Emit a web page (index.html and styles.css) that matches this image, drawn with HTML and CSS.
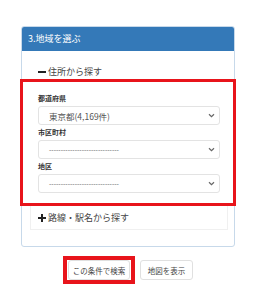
FILE: index.html
```html
<!DOCTYPE html>
<html lang="ja">
<head>
<meta charset="utf-8">
<link rel="stylesheet" href="styles.css">
</head>
<body>
<div class="panel">
  <div class="panel-head">3.地域を選ぶ</div>
  <div class="panel-body">
    <div class="toggle"><span class="sign minus"></span>住所から探す</div>
    <div class="redbox">
      <div class="label">都道府県</div>
      <div class="select"><span class="val dark">東京都(4,169件)</span><svg class="chev" width="7" height="5" viewBox="0 0 7 5"><path d="M1 1.2 L3.5 3.6 L6 1.2" fill="none" stroke="#666" stroke-width="1.2"/></svg></div>
      <div class="label">市区町村</div>
      <div class="select"><span class="val">------------------------------</span><svg class="chev" width="7" height="5" viewBox="0 0 7 5"><path d="M1 1.2 L3.5 3.6 L6 1.2" fill="none" stroke="#666" stroke-width="1.2"/></svg></div>
      <div class="label">地区</div>
      <div class="select"><span class="val">------------------------------</span><svg class="chev" width="7" height="5" viewBox="0 0 7 5"><path d="M1 1.2 L3.5 3.6 L6 1.2" fill="none" stroke="#666" stroke-width="1.2"/></svg></div>
    </div>
    <div class="route"><span class="sign plus"></span>路線・駅名から探す</div>
  </div>
</div>
<div class="actions">
  <div class="btn-mark"><button class="btn btn-search">この条件で検索</button></div>
  <button class="btn btn-map">地図を表示</button>
</div>
</body>
</html>
```
FILE: styles.css
```css
body {
  margin: 0;
  background: #fff;
  font-family: "Noto Sans CJK JP", "Noto Sans", sans-serif;
  color: #333;
}
.panel {
  margin: 26px 0 0 21px;
  width: 212px;
  border: 1px solid #c7d9ea;
  border-radius: 3px;
  background: #fff;
}
.panel-head {
  height: 24px;
  line-height: 24px;
  background: #3479b8;
  color: #fff;
  font-size: 9px;
  padding-left: 6px;
  border-radius: 2px 2px 0 0;
}
.panel-body {
  padding: 13px 0 16px;
}
.toggle {
  display: flex;
  align-items: center;
  height: 15px;
  padding-left: 16px;
  font-size: 9px;
  color: #444;
}
.sign {
  position: relative;
  width: 8px;
  height: 8px;
  margin-right: 2px;
  flex: none;
}
.sign::before, .plus::after {
  content: "";
  position: absolute;
  left: 0;
  top: 3px;
  width: 8px;
  height: 2px;
  background: #222;
}
.plus::after {
  left: 3px;
  top: 0;
  width: 2px;
  height: 8px;
}
.redbox {
  margin: 0 -2px;
  border: 3px solid #e8141b;
  padding: 9px 13px 10px 15px;
}
.label {
  height: 15px;
  line-height: 15px;
  font-size: 7px;
  font-weight: bold;
  color: #333;
}
.select {
  height: 19px;
  box-sizing: border-box;
  border: 1px solid #e3e3e3;
  border-radius: 3px;
  display: flex;
  align-items: center;
  justify-content: space-between;
  padding: 0 4px 0 10px;
}
.val {
  font-family: "Liberation Sans", sans-serif;
  font-size: 7px;
  color: #777;
}
.val.dark {
  font-family: "Noto Sans CJK JP", sans-serif;
  font-size: 8.5px;
  color: #555;
}
.route {
  margin: 0 6px 0 8px;
  height: 23px;
  border: 1px solid #f0f0f0;
  border-top: none;
  display: flex;
  align-items: center;
  padding-left: 7px;
  font-size: 9px;
  color: #444;
}
.actions {
  display: flex;
  justify-content: center;
  align-items: center;
  gap: 5px;
  margin: 9px 0 0 21px;
  width: 214px;
}
.btn-mark {
  border: 4px solid #e8141b;
  padding: 0 1px;
  display: flex;
}
.btn {
  height: 20px;
  padding: 0;
  background: #fff;
  border: 1px solid #e0e0e0;
  border-radius: 3px;
  font-family: "Noto Sans CJK JP", sans-serif;
  font-size: 7.5px;
  color: #444;
}
.btn-search {
  width: 62px;
}
.btn-map {
  width: 53px;
}
```
